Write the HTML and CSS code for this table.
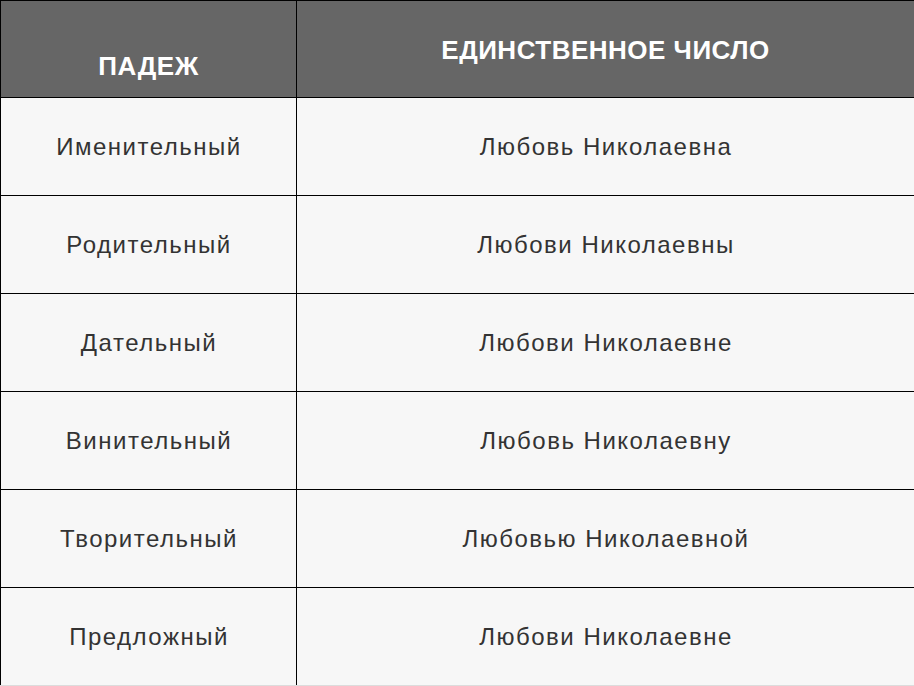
FILE: index.html
```html
<!DOCTYPE html>
<html lang="ru">
<head>
<meta charset="utf-8">
<title>Падежи</title>
<link rel="stylesheet" href="styles.css">
</head>
<body>
<table class="cases">
  <colgroup><col class="col-case"><col class="col-sing"></colgroup>
  <thead>
    <tr>
      <th><div class="hcell h-case">ПАДЕЖ</div></th>
      <th><div class="hcell h-sing">ЕДИНСТВЕННОЕ ЧИСЛО</div></th>
    </tr>
  </thead>
  <tbody>
    <tr><td><div class="cell">Именительный</div></td><td><div class="cell">Любовь Николаевна</div></td></tr>
    <tr><td><div class="cell">Родительный</div></td><td><div class="cell">Любови Николаевны</div></td></tr>
    <tr><td><div class="cell">Дательный</div></td><td><div class="cell">Любови Николаевне</div></td></tr>
    <tr><td><div class="cell">Винительный</div></td><td><div class="cell">Любовь Николаевну</div></td></tr>
    <tr><td><div class="cell">Творительный</div></td><td><div class="cell">Любовью Николаевной</div></td></tr>
    <tr><td><div class="cell">Предложный</div></td><td><div class="cell">Любови Николаевне</div></td></tr>
  </tbody>
</table>
</body>
</html>
```
FILE: styles.css
```css
html, body {
  margin: 0;
  padding: 0;
  background: #f7f7f7;
  overflow: hidden;
}
.cases {
  width: 914px;
  border-collapse: separate;
  border-spacing: 0;
  table-layout: fixed;
  font-family: "Liberation Sans", Arial, sans-serif;
  border-bottom: 1px solid #dcdcdc;
}
.col-case { width: 296px; }
.cases th, .cases td {
  border-left: 1px solid #000;
  border-top: 1px solid #000;
  text-align: center;
  padding: 0;
}
.cases th {
  background: #666666;
  color: #fff;
  font-weight: bold;
}
.hcell {
  box-sizing: border-box;
  height: 96px;
  display: flex;
  align-items: center;
  justify-content: center;
  font-size: 26px;
  letter-spacing: 0.5px;
}
.h-case {
  padding-top: 34px;
}
.h-sing {
  padding-top: 2px;
}
.cases td {
  background: #f7f7f7;
  color: #333;
}
.cell {
  box-sizing: border-box;
  height: 97px;
  display: flex;
  align-items: center;
  justify-content: center;
  font-size: 24px;
  letter-spacing: 1.5px;
  padding-left: 1px;
}
```
